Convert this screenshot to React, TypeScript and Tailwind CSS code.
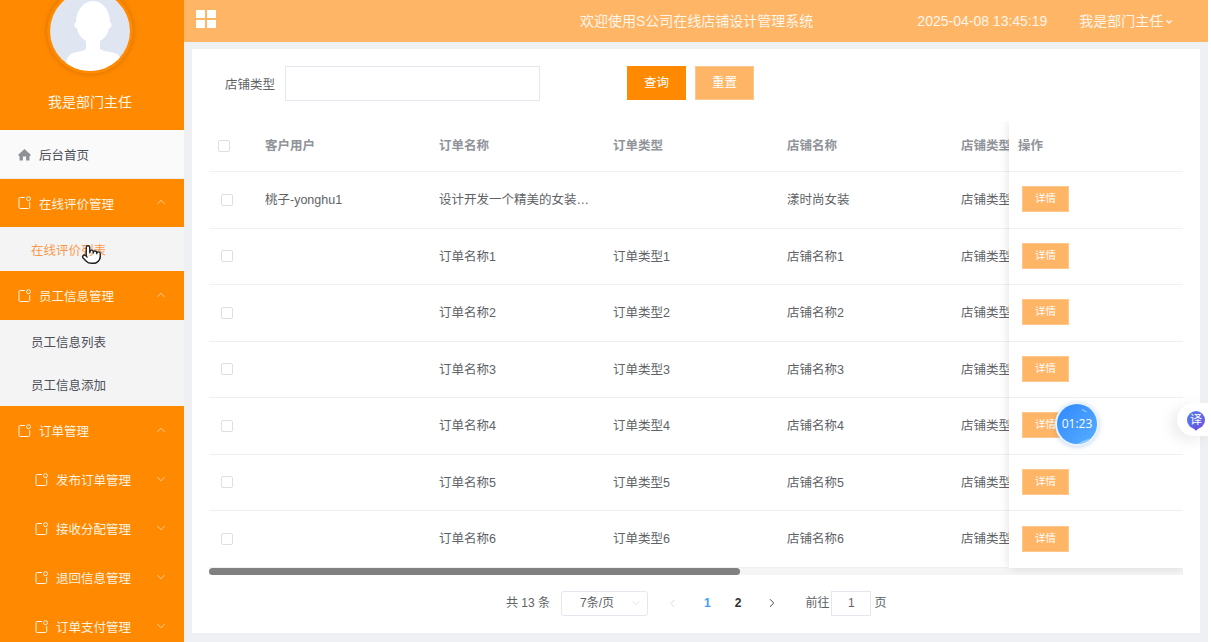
import React from 'react';
import { ChevronDown, ChevronLeft, ChevronRight, ChevronUp, Pointer } from 'lucide-react';

const FONT = { fontFamily: '"Liberation Sans", "Noto Sans CJK SC", sans-serif' };

const TagIcon = () => (
  <svg width="14" height="14" viewBox="0 0 14 14" fill="none" stroke="currentColor" strokeWidth="1" className="shrink-0">
    <path d="M6.5 1.5H2.2A1.2 1.2 0 0 0 1 2.7v8.6a1.2 1.2 0 0 0 1.2 1.2h8.3a1.2 1.2 0 0 0 1.2-1.2V6.5" strokeLinecap="round" />
    <circle cx="10.5" cy="2.7" r="2" />
  </svg>
);

const HomeIcon = () => (
  <svg width="13" height="13" viewBox="0 0 13 13" fill="#8f9196" className="shrink-0">
    <path d="M6.5 1 0.5 6.6V8h1v4.5h3.4V8.6h3.2v3.9h3.4V8h1V6.6z" />
  </svg>
);

const GridIcon = () => (
  <div className="grid grid-cols-[9px_9px] grid-rows-[8px_8px] gap-[2px] -mt-[5px]">
    <span className="bg-white" />
    <span className="bg-white" />
    <span className="bg-white" />
    <span className="bg-white" />
  </div>
);

const Avatar = () => (
  <div className="size-[86px] rounded-full bg-[#ff8a00] p-[3px] shadow-[0_0_5px_#cf7000] -mt-[12px]">
    <svg viewBox="0 0 80 80" className="size-[80px] rounded-full">
      <rect width="80" height="80" fill="#dfe6f1" />
      <ellipse cx="43" cy="31" rx="17" ry="21" fill="#fff" />
      <ellipse cx="26.5" cy="34" rx="2" ry="3" fill="#fff" />
      <ellipse cx="59.5" cy="34" rx="2" ry="3" fill="#fff" />
      <path d="M36 46h14v12c4 3 10 2 17 5 3 2 5 6 6 17H14c1-9 3-14 7-17 6-3 11-2 15-5z" fill="#fff" />
    </svg>
  </div>
);

const MenuRow = ({ label, nested, open, h }: { label: string; nested?: boolean; open?: boolean; h: string }) => (
  <div className={`flex items-center bg-[#ff8900] text-[#fff3e2] text-[12.5px] pr-[16px] ${nested ? 'pl-[35px]' : 'pl-[18px]'} ${h}`}>
    <TagIcon />
    <span className="ml-[7px] mt-[4px]">{label}</span>
    <span className="ml-auto mb-[2px]">
      {open ? <ChevronUp size={14} strokeWidth={1.1} /> : <ChevronDown size={14} strokeWidth={1.1} />}
    </span>
  </div>
);

const SubRow = ({ label, active, h }: { label: string; active?: boolean; h: string }) => (
  <div className={`flex items-center pl-[31px] pt-[4px] bg-[#f4f4f5] text-[12.5px] ${active ? 'text-[#f89a4e]' : 'text-[#4c5058]'} ${h}`}>{label}</div>
);

const Sidebar = () => (
  <aside className="w-[184px] shrink-0 h-full overflow-hidden">
    <div className="h-[130px] bg-[#ff8900] flex flex-col items-center pr-[4px]">
      <Avatar />
      <div className="mt-[18px] text-[14px] text-[#fff3e2]">我是部门主任</div>
    </div>
    <div className="h-[49px] flex items-center pl-[18px] bg-[#fafafa] text-[#4c5058] text-[12.5px] border-b border-[#eeeeee]">
      <HomeIcon />
      <span className="ml-[8px] mt-[4px]">后台首页</span>
    </div>
    <MenuRow label="在线评价管理" open h="h-[48px]" />
    <SubRow label="在线评价列表" active h="h-[44px]" />
    <MenuRow label="员工信息管理" open h="h-[49px]" />
    <SubRow label="员工信息列表" h="h-[43px]" />
    <SubRow label="员工信息添加" h="h-[43px]" />
    <MenuRow label="订单管理" open h="h-[49px]" />
    <MenuRow label="发布订单管理" nested h="h-[49px]" />
    <MenuRow label="接收分配管理" nested h="h-[49px]" />
    <MenuRow label="退回信息管理" nested h="h-[49px]" />
    <MenuRow label="订单支付管理" nested h="h-[49px]" />
  </aside>
);

const Header = () => (
  <header className="h-[42px] shrink-0 bg-[#ffb566] text-[#fff6ea] text-[14px] flex items-center pl-[12px]">
    <GridIcon />
    <span className="ml-[364px] whitespace-nowrap">欢迎使用S公司在线店铺设计管理系统</span>
    <span className="ml-[104px] whitespace-nowrap">2025-04-08 13:45:19</span>
    <span className="ml-[32px] whitespace-nowrap">我是部门主任</span>
    <svg width="8" height="6" viewBox="0 0 8 6" fill="none" stroke="currentColor" strokeWidth="1.5" className="ml-[2px] mt-[2px]">
      <path d="M1.5 1.5 4 4l2.5-2.5" />
    </svg>
  </header>
);

const Checkbox = () => <span className="block size-[12px] rounded-[2px] border border-[#dcdfe6] bg-white" />;

const rows = [
  { user: '桃子-yonghu1', name: '设计开发一个精美的女装网站首页', type: '', shop: '漾时尚女装', kind: '店铺类型' },
  ...[1, 2, 3, 4, 5, 6].map((n) => ({
    user: '',
    name: `订单名称${n}`,
    type: `订单类型${n}`,
    shop: `店铺名称${n}`,
    kind: '店铺类型',
  })),
];

const Cell = ({ children, last }: { children?: React.ReactNode; last?: boolean }) => (
  <div className={`shrink-0 pl-[9px] ${last ? 'w-[48px]' : 'w-[174px]'}`}>
    <div className="truncate w-[156px]">{children}</div>
  </div>
);

const Table = () => (
  <div className="mt-[20px] overflow-hidden">
    <div className="flex">
      <div className="w-[800px] shrink-0 overflow-hidden">
        <div className="h-[51px] flex items-center border-b border-[#eff0f3] text-[12.5px] font-bold text-[#909399]">
          <div className="w-[47px] shrink-0 pl-[9px]">
            <Checkbox />
          </div>
          <Cell>客户用户</Cell>
          <Cell>订单名称</Cell>
          <Cell>订单类型</Cell>
          <Cell>店铺名称</Cell>
          <Cell last>店铺类型</Cell>
        </div>
        {rows.map((r) => (
          <div key={r.name} className="h-[56.5px] flex items-center border-b border-[#eff0f3] text-[12.5px] text-[#606266]">
            <div className="w-[47px] shrink-0 pl-[12px]">
              <Checkbox />
            </div>
            <div className="flex pt-[2px]">
              <Cell>{r.user}</Cell>
              <Cell>{r.name}</Cell>
              <Cell>{r.type}</Cell>
              <Cell>{r.shop}</Cell>
              <Cell last>{r.kind}</Cell>
            </div>
          </div>
        ))}
      </div>
      <div className="w-[174px] shrink-0 bg-white relative z-10 shadow-[0_0_10px_rgba(0,0,0,0.12)]">
        <div className="h-[51px] flex items-center pl-[9px] border-b border-[#eff0f3] text-[12.5px] font-bold text-[#909399]">操作</div>
        {rows.map((r) => (
          <div key={r.name} className="h-[56.5px] flex items-center pl-[13px] border-b border-[#eff0f3] last:border-b-0">
            <button className="w-[47px] h-[26px] mb-[1px] bg-[#ffb566] border border-[#ffc78c] text-white text-[10.5px]">详情</button>
          </div>
        ))}
      </div>
    </div>
    <div className="h-[7px] bg-[#f5f5f5]">
      <div className="w-[531px] h-[7px] rounded-full bg-[#808080]" />
    </div>
  </div>
);

const Pagination = () => (
  <div className="flex items-center h-[25px] mt-[16px] ml-[297px] text-[12px] text-[#606266]">
    <span>共 13 条</span>
    <div className="ml-[11px] w-[87px] h-[25px] border border-[#e4e7ed] rounded-[3px] flex items-center pl-[18px] pr-[5px]">
      <span>7条/页</span>
      <ChevronDown size={12} strokeWidth={1} className="ml-auto text-[#c0c4cc]" />
    </div>
    <ChevronLeft size={13} strokeWidth={1.2} className="ml-[18px] text-[#c0c4cc]" />
    <span className="ml-[25px] font-bold text-[#409eff]">1</span>
    <span className="ml-[24px] font-bold text-[#303133]">2</span>
    <ChevronRight size={14} strokeWidth={1.5} className="ml-[24px] text-[#303133]" />
    <span className="ml-[26px]">前往</span>
    <div className="ml-[2px] w-[40px] h-[25px] border border-[#e4e7ed] flex items-center justify-center">1</div>
    <span className="ml-[3px]">页</span>
  </div>
);

const Timer = () => (
  <div className="absolute left-[1055px] top-[402px] size-[44px] rounded-full p-[2px] bg-[#eaf4fb] shadow-[0_1px_5px_rgba(60,120,200,0.3)] z-20">
    <div className="relative overflow-hidden size-[40px] rounded-full bg-gradient-to-br from-[#2f88ff] to-[#58adff] flex items-center justify-center text-white text-[12px] font-['Open_Sans']">
      01:23
      <svg viewBox="0 0 40 40" className="absolute inset-0 size-[40px]" fill="none">
        <path d="M25 5.5l4.5 2.3" stroke="#cfe4ff" strokeWidth="0.8" />
        <path d="M20 40c6-4 12-5 18-7l-6 7z" fill="#8cc8ff" />
      </svg>
    </div>
  </div>
);

const TranslateWidget = () => (
  <div className="absolute left-[1177px] top-[403px] w-[31px] h-[33px] rounded-l-full bg-white shadow-[-6px_4px_14px_rgba(0,0,0,0.08)] flex items-center pl-[10px] z-20">
    <div className="relative size-[18px] shrink-0 rounded-full bg-gradient-to-br from-[#4f7df0] to-[#6a52e0] flex items-center justify-center text-white text-[12px] leading-none">
      译
      <span className="absolute -bottom-[1px] left-[7px] size-[4px] rotate-45 bg-[#6a52e0]" />
    </div>
  </div>
);

const Cursor = () => (
  <Pointer size={21} strokeWidth={1.6} className="absolute left-[81px] top-[244px] z-20 text-[#222] fill-white" />
);

export default function App() {
  return (
    <div style={FONT} className="relative w-[1208px] h-[642px] overflow-hidden flex bg-[#eef0f4]">
      <Sidebar />
      <div className="flex-1 flex flex-col min-w-0">
        <Header />
        <main className="mt-[7px] mx-[8px] h-[584px] bg-white px-[17px] pt-[17px]">
          <div className="flex items-start h-[35px]">
            <label className="ml-[16px] mt-[10px] text-[12.5px] text-[#606266]">店铺类型</label>
            <input className="ml-[10px] w-[255px] h-[35px] border border-[#e4e7ed] outline-none" />
            <button className="ml-[87px] w-[59px] h-[34px] bg-[#ff8900] text-white text-[12.5px]">查询</button>
            <button className="ml-[9px] w-[59px] h-[34px] bg-[#ffb566] border border-[#ffc78c] text-white text-[12.5px]">重置</button>
          </div>
          <Table />
          <Pagination />
        </main>
      </div>
      <Timer />
      <TranslateWidget />
      <Cursor />
    </div>
  );
}
